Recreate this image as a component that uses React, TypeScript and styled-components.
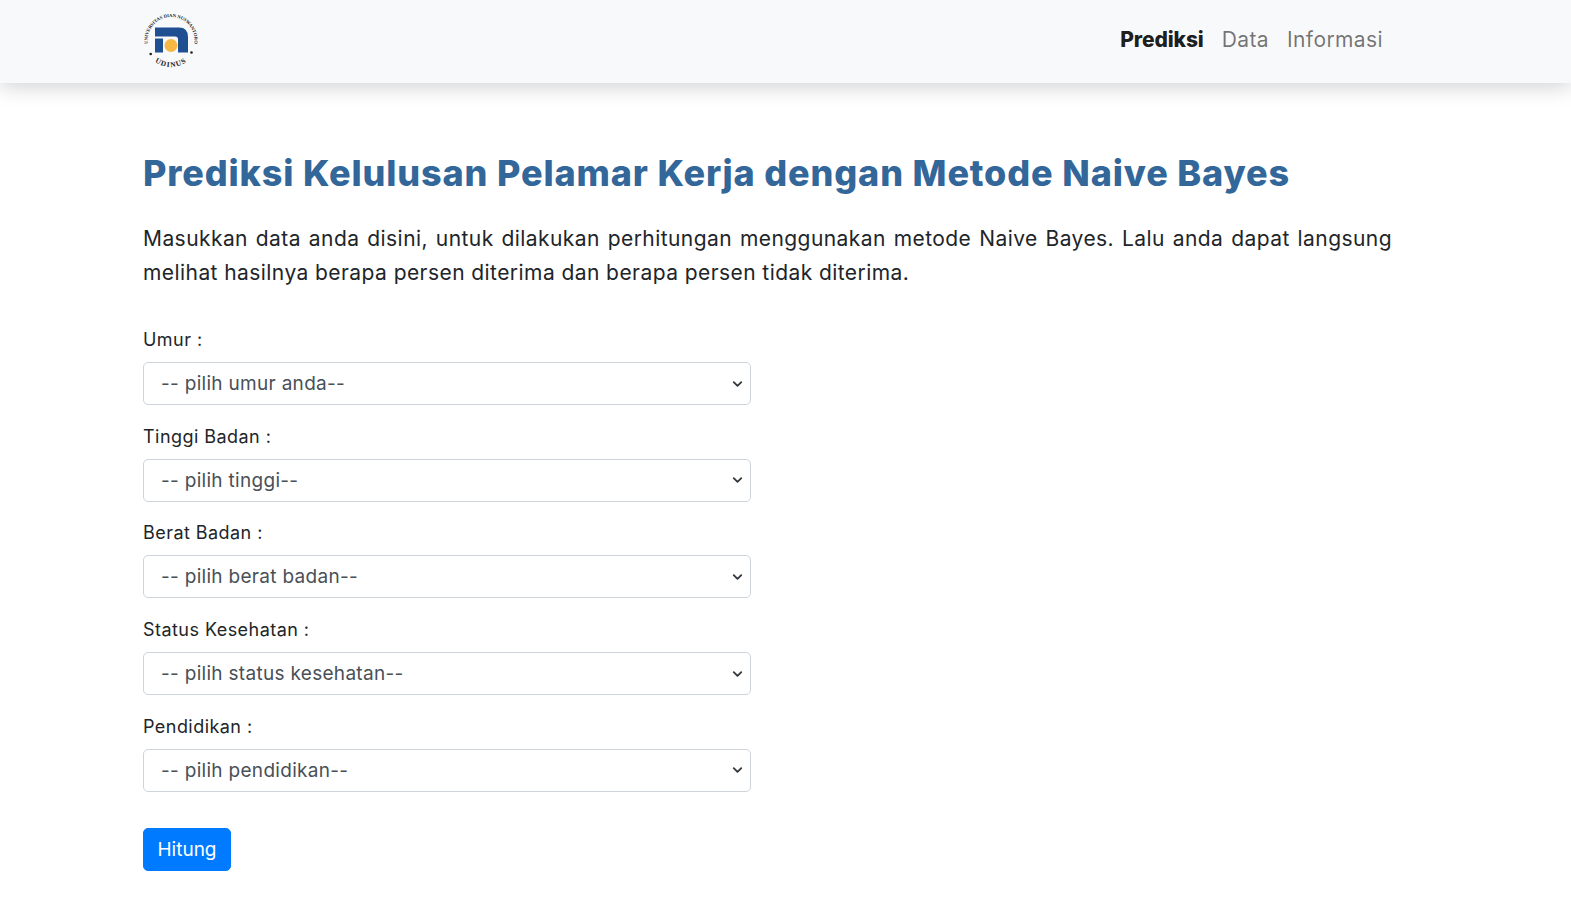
import React from 'react';
import styled, { createGlobalStyle } from 'styled-components';

const GlobalStyle = createGlobalStyle`
  html, body {
    margin: 0;
    padding: 0;
    background: #fff;
    overflow: hidden;
  }
  * {
    box-sizing: border-box;
  }
  body {
    font-family: "Inter", "Noto Sans", "Liberation Sans", sans-serif;
    color: #212529;
  }
`

const StyledNav = styled.nav`
  height: 83px;
  background: #f8f9fa;
  box-shadow: 0 4px 20px rgba(0, 0, 0, 0.18);
  padding: 0 188px 0 143px;
  display: flex;
  align-items: center;
  justify-content: space-between;
`

const StyledLinks = styled.ul`
  display: flex;
  gap: 18px;
  margin: 0 0 4px;
  padding: 0;
  list-style: none;
`

const StyledLink = styled.a<{ $active?: boolean }>`
  font-size: 21px;
  line-height: 30px;
  font-weight: ${p => (p.$active ? 800 : 400)};
  letter-spacing: ${p => (p.$active ? '-0.1px' : '0.4px')};
  color: ${p => (p.$active ? 'rgba(0, 0, 0, 0.9)' : 'rgba(0, 0, 0, 0.55)')};
  text-decoration: none;
`

const StyledMain = styled.main`
  width: 1392px;
  padding: 62px 0 0 143px;
`

const StyledTitle = styled.h1`
  margin: 0 0 21px;
  font-size: 36px;
  line-height: 56px;
  font-weight: 800;
  color: #336699;
  letter-spacing: 0.85px;
`

const StyledLead = styled.p`
  margin: 0 0 36px;
  font-size: 21px;
  line-height: 34px;
  letter-spacing: 0.43px;
  text-align: justify;
`

const StyledField = styled.div`
  width: 608px;
  margin-bottom: 17.7px;
`

const StyledLabel = styled.label`
  display: block;
  margin-bottom: 9px;
  font-size: 18px;
  line-height: 27px;
  letter-spacing: 0.45px;
`

const StyledSelect = styled.select`
  display: block;
  width: 100%;
  height: 43px;
  padding: 0 36px 0 17px;
  appearance: none;
  border: 1px solid #ced4da;
  border-radius: 5px;
  background: #fff url("data:image/svg+xml,%3csvg xmlns='http://www.w3.org/2000/svg' viewBox='0 0 16 16'%3e%3cpath fill='none' stroke='%23343a40' stroke-linecap='round' stroke-linejoin='round' stroke-width='3' d='M2 5l6 6 6-6'/%3e%3c/svg%3e") no-repeat right 6px center / 13px 10px;
  font-family: inherit;
  font-size: 19px;
  letter-spacing: 0.3px;
  color: #495057;
`

const StyledButton = styled.button`
  display: block;
  width: 88px;
  height: 43px;
  margin-top: 36px;
  padding: 0;
  border: 1px solid #007bff;
  border-radius: 5px;
  background: #007bff;
  color: #fff;
  font-family: inherit;
  font-size: 19px;
  cursor: pointer;
`

const Logo = () => (
  <svg width="56" height="56" viewBox="0 1.5 56 56">
    <defs>
      <path id="logoTop" d="M5.9 36 A23.5 23.5 0 1 1 50.1 36" />
      <path id="logoBottom" d="M6.9 44 A26.5 26.5 0 0 0 49.1 44" />
    </defs>
    <text fontFamily="Liberation Serif" fontSize="4.7" fontWeight="700" fill="#222">
      <textPath href="#logoTop" startOffset="50%" textAnchor="middle">UNIVERSITAS DIAN NUSWANTORO</textPath>
    </text>
    <text fontFamily="Liberation Serif" fontSize="7.4" fontWeight="700" fill="#222" letterSpacing="1">
      <textPath href="#logoBottom" startOffset="50%" textAnchor="middle">UDINUS</textPath>
    </text>
    <circle cx="7.7" cy="41.5" r="1.3" fill="#222" />
    <circle cx="48.5" cy="40" r="1.3" fill="#222" />
    <path d="M12 15 H36 Q45 15 45 24.5 V40 H35 V26.5 Q35 24 32 24 H12 Z" fill="#1d4f91" />
    <path d="M12 26 H20 V40 H12 Z" fill="#1d4f91" />
    <circle cx="28" cy="33" r="6.5" fill="#f7b944" />
  </svg>
)

const fields = [
  { label: 'Umur :', placeholder: '-- pilih umur anda--' },
  { label: 'Tinggi Badan :', placeholder: '-- pilih tinggi--' },
  { label: 'Berat Badan :', placeholder: '-- pilih berat badan--' },
  { label: 'Status Kesehatan :', placeholder: '-- pilih status kesehatan--' },
  { label: 'Pendidikan :', placeholder: '-- pilih pendidikan--' },
]

export default function App() {
  return (
    <>
      <GlobalStyle />
      <StyledNav>
        <Logo />
        <StyledLinks>
          <li><StyledLink href="#" $active>Prediksi</StyledLink></li>
          <li><StyledLink href="#">Data</StyledLink></li>
          <li><StyledLink href="#">Informasi</StyledLink></li>
        </StyledLinks>
      </StyledNav>
      <StyledMain>
        <StyledTitle>Prediksi Kelulusan Pelamar Kerja dengan Metode Naive Bayes</StyledTitle>
        <StyledLead>
          Masukkan data anda disini, untuk dilakukan perhitungan menggunakan metode Naive Bayes. Lalu anda dapat langsung melihat hasilnya berapa persen diterima dan berapa persen tidak diterima.
        </StyledLead>
        <form>
          {fields.map(f => (
            <StyledField key={f.label}>
              <StyledLabel>{f.label}</StyledLabel>
              <StyledSelect defaultValue="">
                <option value="">{f.placeholder}</option>
              </StyledSelect>
            </StyledField>
          ))}
          <StyledButton type="button">Hitung</StyledButton>
        </form>
      </StyledMain>
    </>
  )
}
